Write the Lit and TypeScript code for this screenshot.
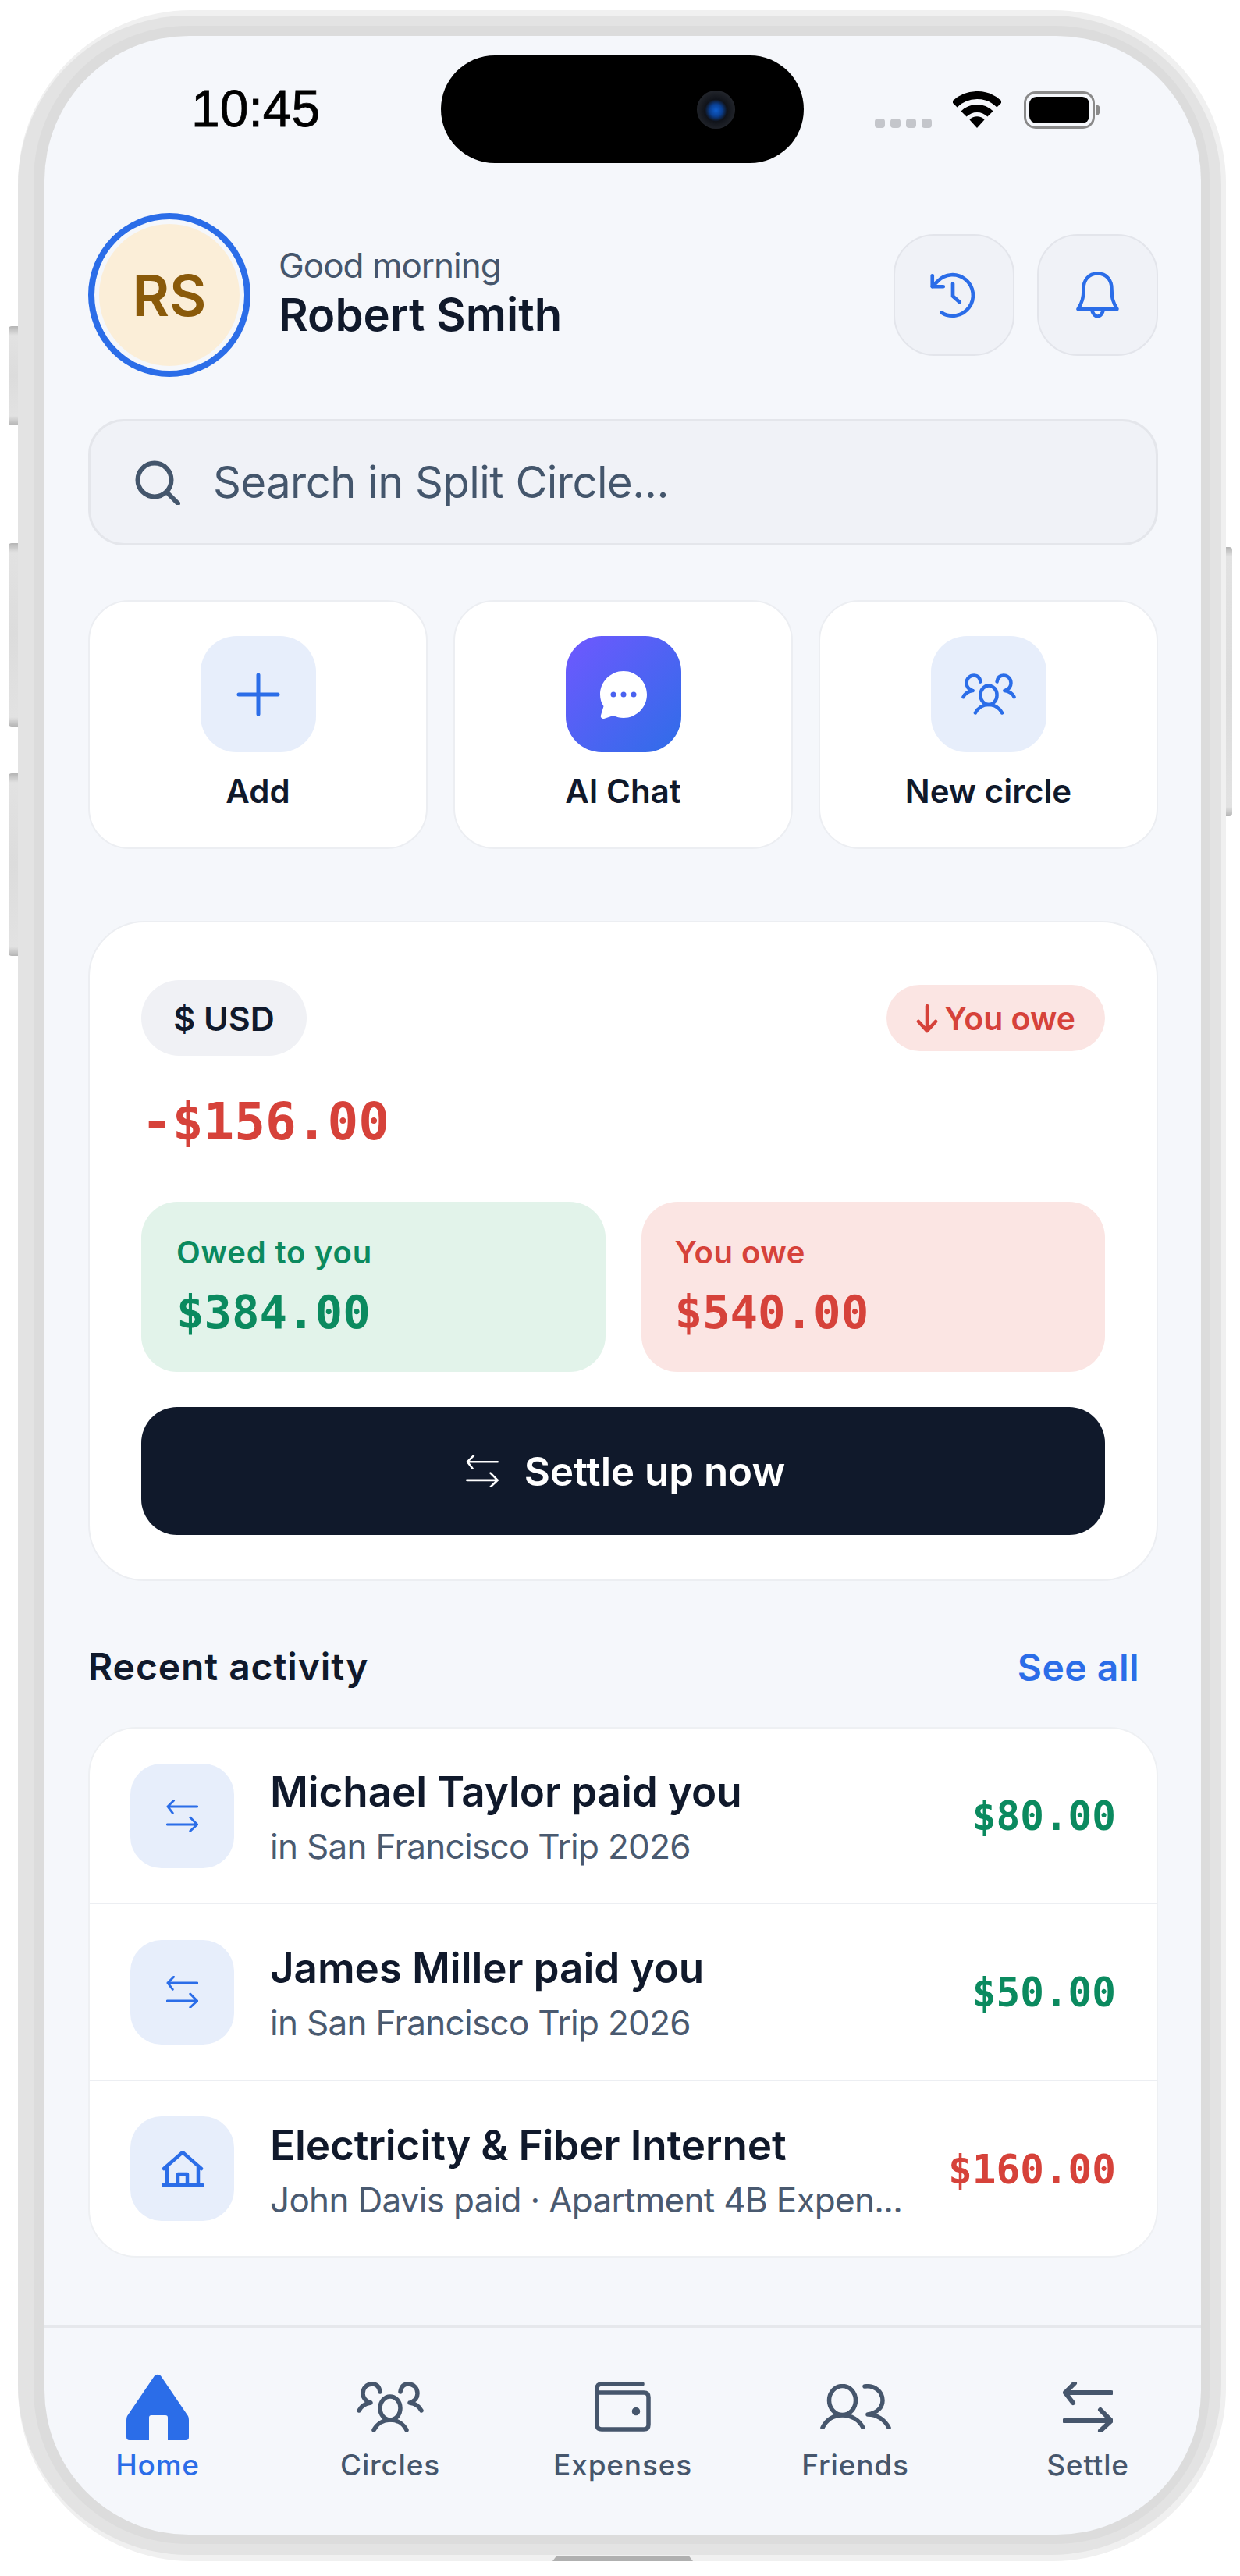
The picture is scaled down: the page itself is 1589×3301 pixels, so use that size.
import { LitElement, html, css } from "lit";
import { customElement } from "lit/decorators.js";

const swap = () => html`<svg viewBox="0 0 64 64" fill="none" stroke="currentColor" stroke-linecap="round" stroke-linejoin="round"><path d="M62 14H3M15 2 3 14l10 13M2 50h60M48 36l14 14-14 13"/></svg>`;
const users = () => html`<svg viewBox="0 0 86 65" fill="none" stroke="currentColor" stroke-linecap="round" stroke-linejoin="round"><ellipse cx="43" cy="34" rx="13" ry="15"/><path d="M22 62C26 54 34 49 43 49s17 5 21 13M30 13C29 6 25 3 20 3 13 3 8 8 8 15c0 6 4 10 10 12M18 27C11 28 6 31 3 37M56 13C57 6 61 3 66 3c7 0 12 5 12 12 0 6-4 10-10 12M68 27c7 1 12 4 15 10"/></svg>`;
const wallet = () => html`<svg viewBox="0 0 72 64" fill="none" stroke="currentColor" stroke-linecap="round" stroke-linejoin="round"><path d="M61 3H9C5 3 3 5 3 9v46c0 4 2 6 6 6h54c4 0 6-2 6-6V20c0-4-2-6-6-6H3"/><circle cx="53" cy="38" r="2.5" fill="currentColor"/></svg>`;
const friends = () => html`<svg viewBox="0 0 91 58" fill="none" stroke="currentColor" stroke-linecap="round" stroke-linejoin="round"><ellipse cx="28.5" cy="21" rx="17" ry="18.5"/><path d="M3 56C8 46 17 40 28.5 40S50 46 55 56M57 3C70 1 80 10 80 21c0 9-7 16-19 18M61 39c12 0 22 7 27 17"/></svg>`;
const home = () => html`<svg viewBox="0 0 80 85" fill="currentColor"><path d="M36 2.500Q40-1 44 2.500L79 54Q80 56 80 59V81Q80 85 76 85H53V56Q53 53 50 53H32Q29 53 29 56V85H4Q0 85 0 81V59Q0 56 1 54Z"/></svg>`;

const ACTIVITY = [
  { icon: "swap", title: "Michael Taylor paid you", sub: "in San Francisco Trip 2026", amt: "$80.00", tone: "pos" },
  { icon: "swap", title: "James Miller paid you", sub: "in San Francisco Trip 2026", amt: "$50.00", tone: "pos" },
  { icon: "house", title: "Electricity & Fiber Internet", sub: "John Davis paid · Apartment 4B Expen...", amt: "$160.00", tone: "neg" },
];

const NAV = [
  { label: "Home", icon: home, cls: "i-home", active: true },
  { label: "Circles", icon: users, cls: "i-circles", active: false },
  { label: "Expenses", icon: wallet, cls: "i-wallet", active: false },
  { label: "Friends", icon: friends, cls: "i-friends", active: false },
  { label: "Settle", icon: swap, cls: "i-settle", active: false },
];

@customElement("app-root")
export class AppRoot extends LitElement {
  static styles = css`
    :host { display: block; width: 1589px; height: 3301px; background: #fff; font-family: Inter, "Liberation Sans", sans-serif; color: #10192b; overflow: hidden; position: relative; }
    * { box-sizing: border-box; }
    svg { display: block; }

    .stage { padding: 13px 0 0 23px; position: relative; }
    .f1 { width: 1548px; height: 3269px; background: #f0f0f0; border-radius: 222px; padding: 7px 6px 8px 0; }
    .f2 { height: 100%; background: #e3e3e3; border-radius: 218px; padding: 13px 15px 14px 20px; }
    .f3 { height: 100%; background: #dcdcdc; border-radius: 198px; padding: 13px 11px 12px 14px; }
    .screen { height: 100%; background: #f5f7fb; border-radius: 185px; overflow: hidden; display: flex; flex-direction: column; }

    .btn { position: absolute; background: linear-gradient(180deg, #b4b4b4 0, #e2e2e2 12px, #dcdcdc 50%, #e2e2e2 calc(100% - 12px), #b4b4b4 100%); border-radius: 4px 0 0 4px; }
    .b1 { left: 11px; top: 418px; width: 12px; height: 127px; }
    .b2 { left: 11px; top: 696px; width: 12px; height: 235px; }
    .b3 { left: 11px; top: 991px; width: 12px; height: 234px; }
    .b4 { left: 1571px; top: 701px; width: 8px; height: 345px; border-radius: 0 4px 4px 0; }
    .bottom-bar { position: absolute; left: 708px; top: 3275px; width: 180px; height: 7px; background: #b0b0b0; clip-path: polygon(3% 0, 97% 0, 100% 100%, 0 100%); }

    .status { display: grid; grid-template-columns: 508px 465px 1fr; padding-top: 25px; flex: none; }
    .time { padding: 35px 0 0 188px; font: 400 66px/1 "Liberation Sans", Arial, sans-serif; color: #000; -webkit-text-stroke: 0.8px #000; height: 138px; }
    .island { height: 138px; background: #000; border-radius: 72px; display: flex; align-items: center; justify-content: flex-end; padding-right: 88px; }
    .cam { width: 49px; height: 49px; border-radius: 50%; background: radial-gradient(circle at 50% 52%, #0f5fd0 0, #0a3f92 22%, #10131a 40%, #2a2d33 85%, #55585e 100%); }
    .indic { display: flex; padding: 46px 0 0 91px; height: 138px; }
    .dots { display: flex; gap: 7px; margin: 35px 27px 0 0; }
    .dots i { width: 13px; height: 12px; border-radius: 4px; background: #c4c6cb; }
    .wifi { width: 62px; height: 47px; margin-right: 29px; }
    .batt { width: 91px; height: 48px; border: 3px solid #8a8a8a; border-radius: 15px; padding: 4px; position: relative; }
    .batt i { display: block; height: 100%; background: #000; border-radius: 9px; }
    .batt b { position: absolute; left: 89px; top: 14px; width: 6px; height: 14px; background: #8a8a8a; border-radius: 0 6px 6px 0; }

    main { flex: 1; padding: 64px 55px 0 56px; display: flex; flex-direction: column; min-height: 0; }
    .head { display: flex; align-items: center; height: 210px; }
    .avatar { width: 208px; height: 210px; border-radius: 50%; border: 8px solid #2b6de8; padding: 6px; flex: none; }
    .avatar div { width: 100%; height: 100%; border-radius: 50%; background: #fbeed8; color: #8a5a0a; font-size: 73px; font-weight: 600; display: flex; align-items: center; justify-content: center; }
    .who { margin: -10px 0 0 36px; flex: 1; }
    .hi { font-size: 44px; line-height: 60px; color: #46566c; letter-spacing: -1px; }
    .name { font-size: 58px; line-height: 66px; font-weight: 600; letter-spacing: 0; }
    .round { width: 155px; height: 156px; border-radius: 52px; border: 2px solid #e3e5eb; background: #f0f2f7; color: #2b6de8; display: flex; align-items: center; justify-content: center; margin-left: 29px; flex: none; }
    .round svg.hist { width: 70px; height: 70px; margin-right: 3px; }
    .round svg.bell { width: 55px; height: 60px; }

    .search { margin-top: 54px; height: 162px; border-radius: 46px; border: 3px solid #e4e6eb; background: #f0f2f7; display: flex; align-items: center; padding-left: 57px; color: #44566c; font-size: 56px; letter-spacing: -0.5px; flex: none; }
    .search svg { width: 58px; height: 57px; margin-right: 42px; }

    .actions { margin-top: 70px; display: grid; grid-template-columns: repeat(3, 1fr); gap: 33px; flex: none; }
    .action { height: 319px; background: #fff; border: 2px solid #eceef2; border-radius: 52px; display: flex; flex-direction: column; align-items: center; padding-top: 44px; }
    .tile { width: 148px; height: 149px; border-radius: 46px; background: #e7eefb; color: #2b6de8; display: flex; align-items: center; justify-content: center; }
    .tile.ai { background: linear-gradient(135deg, #6f58ff 0%, #2f6de8 100%); }
    .action span { margin-top: 22px; font-size: 42px; line-height: 56px; font-weight: 600; }
    .plus { width: 56px; height: 56px; }
    .chat { width: 62px; height: 62px; }
    .tile .users { width: 70px; height: 53px; }
    .tile .users svg { width: 70px; height: 53px; stroke-width: 5.500; }

    .balance { margin-top: 92px; height: 846px; background: #fff; border: 2px solid #eceef2; border-radius: 72px; padding: 74px 66px 0; flex: none; }
    .b-top { display: flex; align-items: center; justify-content: space-between; }
    .usd { width: 212px; height: 97px; border-radius: 49px; background: #f0f1f5; display: flex; align-items: center; justify-content: center; font-size: 43px; font-weight: 600; }
    .owe-pill { width: 280px; height: 85px; border-radius: 43px; background: #fbe5e3; color: #d6423a; display: flex; align-items: center; justify-content: center; gap: 8px; font-size: 41px; font-weight: 600; }
    .owe-pill svg { width: 28px; height: 40px; }
    .mono { font-family: "DejaVu Sans Mono", "Liberation Mono", monospace; font-weight: 700; }
    .total { margin-top: 45px; font-size: 66px; line-height: 80px; color: #d6423a; }
    .pair { margin-top: 62px; display: grid; grid-template-columns: 1fr 1fr; gap: 46px; }
    .sum { height: 218px; border-radius: 46px; padding: 40px 0 0 45px; }
    .sum.pos { background: #e2f3ea; color: #0b8a5f; }
    .sum.neg { background: #fbe5e3; color: #d6423a; }
    .sum .l { font-size: 40px; line-height: 50px; font-weight: 600; letter-spacing: 0.8px; }
    .sum.neg .l { margin-left: -2px; letter-spacing: 0.5px; }
    .sum .v { font-size: 59px; line-height: 70px; margin-top: 17px; }
    .sum.neg .v { margin-left: -2px; }
    .settle { margin-top: 45px; height: 164px; border-radius: 46px; background: #10192b; color: #fff; display: flex; align-items: center; justify-content: center; gap: 33px; font-size: 51px; font-weight: 600; padding-left: 6px; }
    .settle svg { width: 42px; height: 42px; stroke-width: 4; }

    .sect { margin-top: 80px; display: flex; justify-content: space-between; align-items: center; height: 60px; flex: none; }
    .sect h2 { margin: 0; font-size: 48px; font-weight: 600; line-height: 60px; letter-spacing: 0.9px; }
    .sect a { font-size: 48px; font-weight: 600; color: #2b6de8; padding-right: 24px; letter-spacing: 0.5px; }

    .list { margin-top: 47px; background: #fff; border: 2px solid #eef0f3; border-radius: 62px; flex: none; }
    .row { height: 227px; display: flex; align-items: center; padding: 0 52px; border-top: 2px solid #eceef2; }
    .row:first-child { border-top: 0; height: 223px; }
    .row:last-child { height: 226px; }
    .r-ic { width: 133px; height: 134px; border-radius: 40px; background: #e7eefb; color: #2b6de8; display: flex; align-items: center; justify-content: center; flex: none; }
    .r-ic svg { width: 41px; height: 41px; stroke-width: 4.500; }
    .r-ic svg.house { width: 54px; height: 46px; }
    .r-t { flex: 1; margin: 5px 0 0 46px; min-width: 0; }
    .r-t b { display: block; font-size: 53px; line-height: 64px; font-weight: 600; letter-spacing: -0.1px; }
    .r-t span { display: block; margin-top: 10px; font-size: 44px; line-height: 56px; color: #4a5a70; white-space: nowrap; letter-spacing: -0.7px; }
    .r-a { font-size: 51px; flex: none; margin-top: 2px; }
    .r-a.pos { color: #0b8a5f; }
    .r-a.neg { color: #d6423a; }

    nav { flex: none; height: 269px; border-top: 4px solid #e6e8ec; display: grid; grid-template-columns: repeat(5, 298px); justify-content: center; padding-top: 57px; }
    .item { display: flex; flex-direction: column; align-items: center; color: #46566c; font-size: 37px; font-weight: 500; }
    .item.on { color: #2b6de8; }
    .ico { height: 88px; display: flex; align-items: center; justify-content: center; }
    .i-home svg { width: 80px; height: 85px; }
    .i-circles svg { width: 86px; height: 65px; stroke-width: 5.500; }
    .i-wallet svg { width: 72px; height: 64px; stroke-width: 5.500; }
    .i-friends svg { width: 91px; height: 58px; stroke-width: 5.500; }
    .i-settle svg { width: 64px; height: 64px; stroke-width: 6; }
    .item label { margin-top: 9px; line-height: 44px; letter-spacing: 0.8px; }
  `;

  render() {
    return html`
      <div class="stage">
        <div class="f1"><div class="f2"><div class="f3"><div class="screen">
          <div class="status">
            <div class="time">10:45</div>
            <div class="island"><div class="cam"></div></div>
            <div class="indic">
              <div class="dots"><i></i><i></i><i></i><i></i></div>
              <svg class="wifi" viewBox="0 0 62 47" fill="none" stroke="#000" stroke-width="10"><path d="M2 17A41 41 0 0 1 60 17M14 29A24 24 0 0 1 48 29"/><path d="M31 47 21.500 36.500A13 13 0 0 1 40.500 36.500Z" fill="#000" stroke="none"/></svg>
              <div class="batt"><i></i><b></b></div>
            </div>
          </div>
          <main>
            <div class="head">
              <div class="avatar"><div>RS</div></div>
              <div class="who"><div class="hi">Good morning</div><div class="name">Robert Smith</div></div>
              <div class="round"><svg class="hist" viewBox="0 0 24 24" fill="none" stroke="currentColor" stroke-width="1.600" stroke-linecap="round" stroke-linejoin="round"><path d="M7 19.700A9 9 0 1 0 5.300 6L3 8.200"/><path d="M3 3.500v4.800h4.800M12 7v5.500l3 2.700"/></svg></div>
              <div class="round"><svg class="bell" viewBox="0 0 55 60" fill="none" stroke="currentColor" stroke-width="4.500" stroke-linecap="round" stroke-linejoin="round"><path d="M27.500 2.500C16 2.500 9.500 11 9.500 22c0 12-2 18-7 26h50c-5-8-7-14-7-26 0-11-6.500-19.500-18-19.500Z"/><path d="M20 48.500c1 5 4 9 7.500 9s6.500-4 7.500-9"/></svg></div>
            </div>
            <div class="search">
              <svg viewBox="0 0 58 57" fill="none" stroke="currentColor" stroke-width="6" stroke-linecap="round"><circle cx="25" cy="25" r="21.500"/><path d="M41 41 55 55"/></svg>
              Search in Split Circle...
            </div>
            <div class="actions">
              <div class="action"><div class="tile"><svg class="plus" viewBox="0 0 56 56" fill="none" stroke="currentColor" stroke-width="5" stroke-linecap="round"><path d="M28 3v50M3 28h50"/></svg></div><span>Add</span></div>
              <div class="action"><div class="tile ai"><svg class="chat" viewBox="0 0 62 62"><path d="M31 1C47.500 1 61 14.500 61 31S47.500 61 31 61C26.500 61 22 60 18 58L6 62C3 62.500 1 60 2 57.500L5.500 46C2.500 42 1 36.500 1 31 1 14.500 14.500 1 31 1Z" fill="#fff"/><circle cx="18" cy="31" r="3.500" fill="#4a62f0"/><circle cx="31" cy="31" r="3.500" fill="#4a62f0"/><circle cx="44" cy="31" r="3.500" fill="#4a62f0"/></svg></div><span>AI Chat</span></div>
              <div class="action"><div class="tile"><div class="users">${users()}</div></div><span>New circle</span></div>
            </div>
            <div class="balance">
              <div class="b-top">
                <div class="usd">$ USD</div>
                <div class="owe-pill"><svg viewBox="0 0 28 40" fill="none" stroke="currentColor" stroke-width="4.500" stroke-linecap="round" stroke-linejoin="round"><path d="M14 4v32M3 24l11 12 11-12"/></svg>You owe</div>
              </div>
              <div class="total mono">-$156.00</div>
              <div class="pair">
                <div class="sum pos"><div class="l">Owed to you</div><div class="v mono">$384.00</div></div>
                <div class="sum neg"><div class="l">You owe</div><div class="v mono">$540.00</div></div>
              </div>
              <div class="settle">${swap()}Settle up now</div>
            </div>
            <div class="sect"><h2>Recent activity</h2><a>See all</a></div>
            <div class="list">
              ${ACTIVITY.map((r) => html`
                <div class="row">
                  <div class="r-ic">${r.icon === "swap" ? swap() : html`<svg class="house" viewBox="0 0 54 46" fill="none" stroke="currentColor" stroke-width="3" stroke-linecap="round" stroke-linejoin="round"><path d="M3 23 27 2l24 21M7 20v24M47 20v24M1.500 44h51M21 44V30h12v14"/></svg>`}</div>
                  <div class="r-t"><b>${r.title}</b><span>${r.sub}</span></div>
                  <div class="r-a mono ${r.tone}">${r.amt}</div>
                </div>`)}
            </div>
          </main>
          <nav>
            ${NAV.map((n) => html`<div class="item ${n.active ? "on" : ""} ${n.cls}"><div class="ico">${n.icon()}</div><label>${n.label}</label></div>`)}
          </nav>
        </div></div></div></div>
        <div class="btn b1"></div><div class="btn b2"></div><div class="btn b3"></div><div class="btn b4"></div>
        <div class="bottom-bar"></div>
      </div>
    `;
  }
}
